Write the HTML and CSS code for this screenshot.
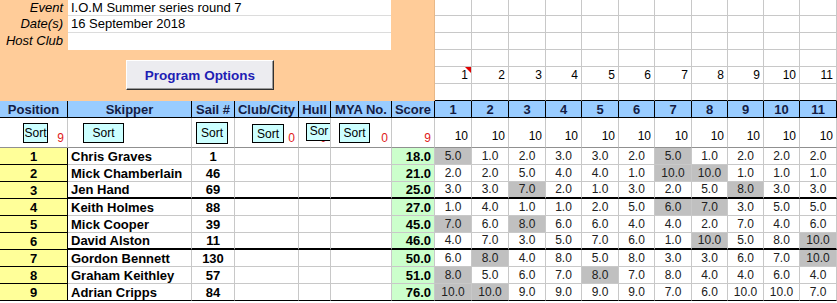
FILE: index.html
```html
<!DOCTYPE html>
<html lang="en">
<head>
    <meta charset="UTF-8">
    <title>IOM Results</title>
    <link rel="stylesheet" href="styles.css">
</head>
<body>
    <table class="sheet">
        <colgroup>
            <col class="w-pos"><col class="w-skip"><col class="w-sail"><col class="w-club"><col class="w-hull"><col class="w-mya"><col class="w-score">
            <col class="w37"><col class="w37"><col class="w37"><col class="w36"><col class="w37"><col class="w36"><col class="w37"><col class="w36"><col class="w36"><col class="w36"><col class="w37">
        </colgroup>
        <tr class="r16">
            <td class="panel" colspan="7" rowspan="6">
                <div class="info">
                    <div class="lbl">Event</div><div class="fld">I.O.M Summer series round 7</div>
                    <div class="lbl">Date(s)</div><div class="fld">16 September 2018</div>
                    <div class="lbl">Host Club</div><div class="fld"></div>
                </div>
                <div class="prog">Program Options</div>
            </td>
            <td></td><td></td><td></td><td></td><td></td><td></td><td></td><td></td><td></td><td></td><td></td>
        </tr>
        <tr><td></td><td></td><td></td><td></td><td></td><td></td><td></td><td></td><td></td><td></td><td></td></tr>
        <tr><td></td><td></td><td></td><td></td><td></td><td></td><td></td><td></td><td></td><td></td><td></td></tr>
        <tr><td></td><td></td><td></td><td></td><td></td><td></td><td></td><td></td><td></td><td></td><td></td></tr>
        <tr class="racenos">
            <td class="note">1</td><td>2</td><td>3</td><td>4</td><td>5</td><td>6</td><td>7</td><td>8</td><td>9</td><td>10</td><td>11</td>
        </tr>
        <tr class="above-head"><td></td><td></td><td></td><td></td><td></td><td></td><td></td><td></td><td></td><td></td><td></td></tr>
        <tr class="head">
            <th>Position</th><th>Skipper</th><th>Sail #</th><th>Club/City</th><th>Hull</th><th>MYA No.</th><th>Score</th>
            <th>1</th><th>2</th><th>3</th><th>4</th><th>5</th><th>6</th><th>7</th><th>8</th><th>9</th><th>10</th><th>11</th>
        </tr>
        <tr class="sorts">
            <td><div class="sc sc-pos"><span class="btn">Sort</span><span class="cnt">9</span></div></td>
            <td><div class="sc sc-skip"><span class="btn">Sort</span></div></td>
            <td><div class="sc sc-sail"><span class="btn">Sort</span></div></td>
            <td><div class="sc sc-club"><span class="btn">Sort</span><span class="cnt">0</span></div></td>
            <td><div class="sc sc-hull"><span class="btn">Sor</span><span class="cnt">0</span></div></td>
            <td><div class="sc sc-mya"><span class="btn">Sort</span><span class="cnt">0</span></div></td>
            <td><div class="sc"><span class="cnt">9</span></div></td>
            <td class="rs">10</td><td class="rs">10</td><td class="rs">10</td><td class="rs">10</td><td class="rs">10</td><td class="rs">10</td><td class="rs">10</td><td class="rs">10</td><td class="rs">10</td><td class="rs">10</td><td class="rs">10</td>
        </tr>
        <tr>
            <td class="pos">1</td><td class="name">Chris Graves</td><td class="sail">1</td><td></td><td></td><td></td><td class="score">18.0</td>
            <td class="v d">5.0</td><td class="v">1.0</td><td class="v">2.0</td><td class="v">3.0</td><td class="v">3.0</td><td class="v">2.0</td><td class="v d">5.0</td><td class="v">1.0</td><td class="v">2.0</td><td class="v">2.0</td><td class="v">2.0</td>
        </tr>
        <tr>
            <td class="pos">2</td><td class="name">Mick Chamberlain</td><td class="sail">46</td><td></td><td></td><td></td><td class="score">21.0</td>
            <td class="v">2.0</td><td class="v">2.0</td><td class="v">5.0</td><td class="v">4.0</td><td class="v">4.0</td><td class="v">1.0</td><td class="v d">10.0</td><td class="v d">10.0</td><td class="v">1.0</td><td class="v">1.0</td><td class="v">1.0</td>
        </tr>
        <tr class="grp">
            <td class="pos">3</td><td class="name">Jen Hand</td><td class="sail">69</td><td></td><td></td><td></td><td class="score">25.0</td>
            <td class="v">3.0</td><td class="v">3.0</td><td class="v d">7.0</td><td class="v">2.0</td><td class="v">1.0</td><td class="v">3.0</td><td class="v">2.0</td><td class="v">5.0</td><td class="v d">8.0</td><td class="v">3.0</td><td class="v">3.0</td>
        </tr>
        <tr>
            <td class="pos">4</td><td class="name">Keith Holmes</td><td class="sail">88</td><td></td><td></td><td></td><td class="score">27.0</td>
            <td class="v">1.0</td><td class="v">4.0</td><td class="v">1.0</td><td class="v">1.0</td><td class="v">2.0</td><td class="v">5.0</td><td class="v d">6.0</td><td class="v d">7.0</td><td class="v">3.0</td><td class="v">5.0</td><td class="v">5.0</td>
        </tr>
        <tr>
            <td class="pos">5</td><td class="name">Mick Cooper</td><td class="sail">39</td><td></td><td></td><td></td><td class="score">45.0</td>
            <td class="v d">7.0</td><td class="v">6.0</td><td class="v d">8.0</td><td class="v">6.0</td><td class="v">6.0</td><td class="v">4.0</td><td class="v">4.0</td><td class="v">2.0</td><td class="v">7.0</td><td class="v">4.0</td><td class="v">6.0</td>
        </tr>
        <tr class="grp">
            <td class="pos">6</td><td class="name">David Alston</td><td class="sail">11</td><td></td><td></td><td></td><td class="score">46.0</td>
            <td class="v">4.0</td><td class="v">7.0</td><td class="v">3.0</td><td class="v">5.0</td><td class="v">7.0</td><td class="v">6.0</td><td class="v">1.0</td><td class="v d">10.0</td><td class="v">5.0</td><td class="v">8.0</td><td class="v d">10.0</td>
        </tr>
        <tr>
            <td class="pos">7</td><td class="name">Gordon Bennett</td><td class="sail">130</td><td></td><td></td><td></td><td class="score">50.0</td>
            <td class="v">6.0</td><td class="v d">8.0</td><td class="v">4.0</td><td class="v">8.0</td><td class="v">5.0</td><td class="v">8.0</td><td class="v">3.0</td><td class="v">3.0</td><td class="v">6.0</td><td class="v">7.0</td><td class="v d">10.0</td>
        </tr>
        <tr>
            <td class="pos">8</td><td class="name">Graham Keithley</td><td class="sail">57</td><td></td><td></td><td></td><td class="score">51.0</td>
            <td class="v d">8.0</td><td class="v">5.0</td><td class="v">6.0</td><td class="v">7.0</td><td class="v d">8.0</td><td class="v">7.0</td><td class="v">8.0</td><td class="v">4.0</td><td class="v">4.0</td><td class="v">6.0</td><td class="v">4.0</td>
        </tr>
        <tr class="last">
            <td class="pos">9</td><td class="name">Adrian Cripps</td><td class="sail">84</td><td></td><td></td><td></td><td class="score">76.0</td>
            <td class="v d">10.0</td><td class="v d">10.0</td><td class="v">9.0</td><td class="v">9.0</td><td class="v">9.0</td><td class="v">9.0</td><td class="v">7.0</td><td class="v">6.0</td><td class="v">10.0</td><td class="v">10.0</td><td class="v">7.0</td>
        </tr>
    </table>
</body>
</html>
```
FILE: styles.css
```css
body {
    margin: 0;
    font-family: "Liberation Sans", Arial, sans-serif;
    background: #fff;
    color: #000;
}
.sheet {
    border-collapse: separate;
    border-spacing: 0;
    table-layout: fixed;
    width: 837px;
    font-size: 13px;
}
.w-pos { width: 68px; }
.w-skip { width: 124px; }
.w-sail { width: 43px; }
.w-club { width: 64px; }
.w-hull { width: 32px; }
.w-mya { width: 61px; }
.w-score { width: 43px; }
.w37 { width: 37px; }
.w36 { width: 36px; }

.sheet td, .sheet th {
    padding: 0;
    border-right: 1px solid #c8c8c8;
    border-bottom: 1px solid #c8c8c8;
    overflow: hidden;
    white-space: nowrap;
    line-height: 15px;
}
.sheet tr { height: 17px; }
.sheet tr.r16 { height: 16px; }

/* event details block */
.sheet td.panel {
    background: #ffcc99;
    vertical-align: top;
    border-bottom: none;
    border-right-color: #e8b888;
}
.info {
    display: grid;
    grid-template-columns: 68px 323px;
    grid-template-rows: 16px 17px 17px;
}
.lbl {
    font-style: italic;
    text-align: right;
    padding-right: 5px;
    line-height: 16px;
}
.fld {
    background: #fff;
    border-bottom: 1px solid #dcdcdc;
    padding-left: 3px;
    line-height: 16px;
}
.info .fld:last-child { border-bottom: none; }
.prog {
    margin: 10px 0 0 126px;
    width: 148px;
    height: 30px;
    box-sizing: border-box;
    background: #ececf0;
    border: 1px solid;
    border-color: #fff #303030 #303030 #fff;
    box-shadow: inset -1px -1px #9a9a9a;
    color: #1e1eb4;
    font-weight: bold;
    font-size: 13.5px;
    display: flex;
    align-items: center;
    justify-content: center;
}

/* race numbers over the header */
.racenos td {
    text-align: right;
    padding-right: 3px !important;
    font-size: 12px;
}
.sheet td.note {
    position: relative;
}
.note::after {
    content: "";
    position: absolute;
    top: 0;
    right: 0;
    border-left: 6px solid transparent;
    border-top: 6px solid #e00000;
}
.sheet .above-head td { border-bottom-color: #000; }

.sheet th {
    background: #99ccff;
    border-right-color: #000;
    border-bottom-color: #000;
    color: #141c44;
    font-weight: bold;
    text-align: center;
}

/* sort buttons */
.sheet tr.sorts { height: 30px; }
.sheet .sorts td {
    vertical-align: top;
    border-bottom-color: #909090;
}
.sc {
    display: flex;
    height: 29px;
    box-sizing: border-box;
    padding-top: 5px;
}
.btn {
    position: relative;
    z-index: 1;
    box-sizing: border-box;
    height: 20px;
    line-height: 18px;
    background: #ccffff;
    border: 1px solid #000;
    font-size: 12px;
    text-align: center;
}
.cnt {
    margin-left: auto;
    align-self: flex-end;
    padding-right: 3px;
    color: #e02020;
    font-size: 12px;
    line-height: 13px;
    margin-bottom: 2px;
}
.sc-pos .btn { margin-left: 23px; width: 25px; }
.sc-skip .btn { margin-left: 15px; width: 41px; }
.sc-sail .btn { margin-left: 4px; width: 32px; height: 22px; line-height: 20px; margin-top: -1px; }
.sc-club .btn { margin-left: 17px; width: 32px; height: 19px; margin-top: 1px; }
.sc-hull .btn { margin-left: 7px; width: 26px; height: 18px; line-height: 14px; }
.sc-hull .cnt { margin-left: -12px; }
.sc-mya .btn { margin-left: 8px; width: 31px; }
.sheet td.rs {
    vertical-align: bottom;
    text-align: right;
    padding: 0 3px 3px 0;
    font-size: 12px;
}

/* results */
.sheet td.pos {
    background: #ffff99;
    font-weight: bold;
    text-align: center;
    border-right-color: #000;
    border-bottom-color: #000;
}
.name {
    font-weight: bold;
    padding-left: 3px !important;
}
.sail {
    font-weight: bold;
    text-align: center;
}
.score {
    background: #ccffcc;
    font-weight: bold;
    text-align: right;
    padding-right: 3px !important;
}
.v {
    text-align: center;
    font-size: 12px;
    color: #202020;
}
.v.d { background: #c0c0c0; }
.sheet tr.grp td { border-bottom: 2px solid #000; }
.sheet tr.grp td.pos { border-bottom-width: 1px; }
.sheet tr.last td { border-bottom-color: #000; }
```
